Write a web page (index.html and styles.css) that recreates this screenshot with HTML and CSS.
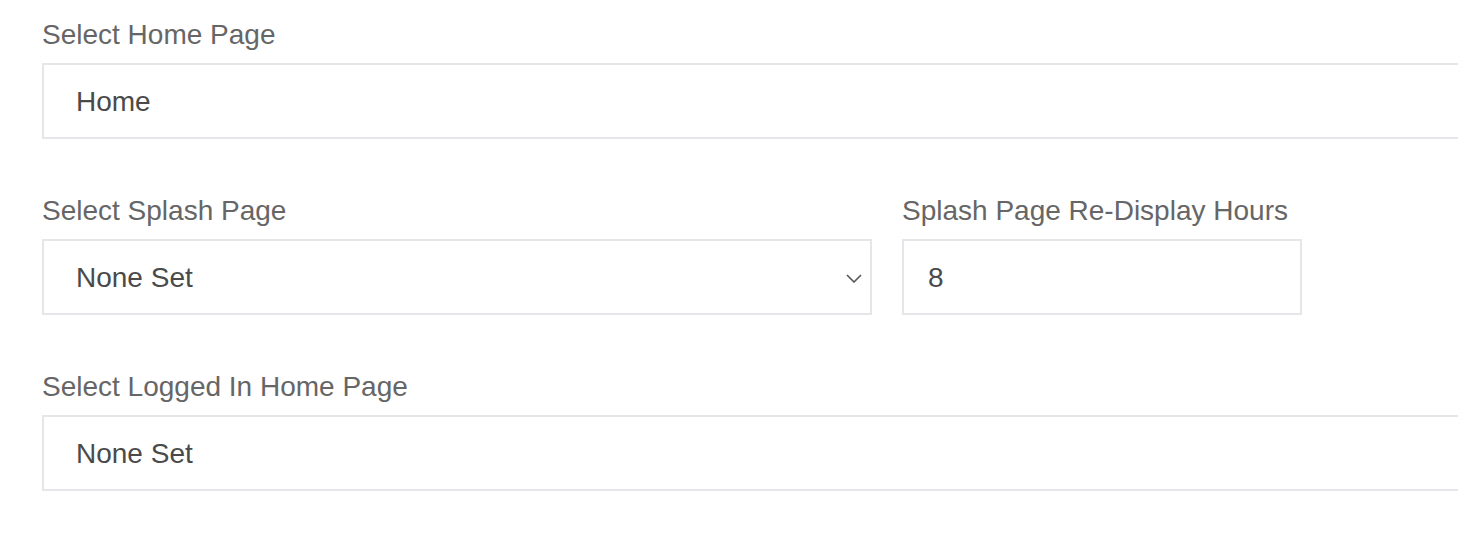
FILE: index.html
```html
<!DOCTYPE html>
<html>
<head>
<meta charset="utf-8">
<link rel="stylesheet" href="styles.css">
</head>
<body>
<form class="settings">
  <div class="group">
    <label class="label">Select Home Page</label>
    <div class="field field-wide"><span class="value">Home</span></div>
  </div>
  <div class="row">
    <div class="group">
      <label class="label">Select Splash Page</label>
      <div class="field field-select">
        <span class="value">None Set</span>
        <svg class="chevron" width="16" height="9" viewBox="0 0 16 9"><path d="M1 1 L8 8 L15 1" fill="none" stroke="#555" stroke-width="1.6"/></svg>
      </div>
    </div>
    <div class="group">
      <label class="label">Splash Page Re-Display Hours</label>
      <div class="field field-hours"><span class="value">8</span></div>
    </div>
  </div>
  <div class="group">
    <label class="label">Select Logged In Home Page</label>
    <div class="field field-wide"><span class="value">None Set</span></div>
  </div>
</form>
</body>
</html>
```

FILE: styles.css
```css
html, body {
  margin: 0;
  padding: 0;
  background: #fff;
  overflow: hidden;
}
body {
  font-family: "Liberation Sans", Arial, Helvetica, sans-serif;
}
.settings {
  display: flex;
  flex-direction: column;
  gap: 54px;
  padding: 17px 0 0 42px;
  width: 1500px;
}
.row {
  display: flex;
  gap: 30px;
}
.group {
  display: flex;
  flex-direction: column;
  gap: 10px;
}
.label {
  font-size: 28px;
  line-height: 36px;
  color: #666;
}
.field {
  box-sizing: border-box;
  height: 76px;
  border: 2px solid #e6e6ea;
  display: flex;
  align-items: center;
  padding: 2px 8px 0 32px;
  background: #fff;
}
.value {
  font-size: 28px;
  color: #4a4a4a;
}
.field-wide {
  width: 1460px;
}
.field-select {
  width: 830px;
}
.field-hours {
  width: 400px;
  padding-left: 24px;
}
.chevron {
  margin-left: auto;
}
```
